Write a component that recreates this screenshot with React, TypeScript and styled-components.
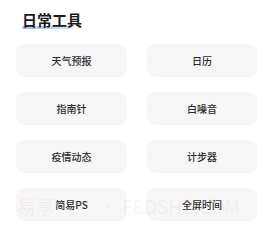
import React from "react";
import styled, { createGlobalStyle } from "styled-components";

const Global = createGlobalStyle`
  html, body { margin: 0; padding: 0; background: #ffffff; }
  body { font-family: "Noto Sans CJK SC", "Noto Sans", sans-serif; }
`;

const Page = styled.div`
  position: relative;
  width: 268px;
  height: 228px;
  overflow: hidden;
  padding-top: 7px;
  box-sizing: border-box;
`;

const Title = styled.h2`
  position: relative;
  display: inline-block;
  margin: 0 0 14px 22px;
  font-size: 15px;
  line-height: 20px;
  font-weight: 700;
  color: #1a1a1a;
  z-index: 0;
  &::after {
    content: "";
    position: absolute;
    left: 0;
    bottom: 1px;
    width: 55px;
    height: 3px;
    border-radius: 2px;
    background: linear-gradient(to right, #98bff4, rgba(185, 212, 250, 0.7) 80%, rgba(255, 255, 255, 0));
    z-index: -1;
  }
`;

const Grid = styled.div`
  display: grid;
  grid-template-columns: 111px 110px;
  grid-auto-rows: 33px;
  column-gap: 20px;
  row-gap: 15px;
  padding-left: 16px;
`;

const Tool = styled.div`
  position: relative;
  display: flex;
  align-items: center;
  justify-content: center;
  background: #f6f6f7;
  border-radius: 9px;
  font-size: 10px;
  font-weight: 500;
  color: #2b2b2b;
  z-index: 2;
`;

const Watermark = styled.div`
  position: absolute;
  left: 17px;
  top: 194px;
  display: flex;
  align-items: center;
  font-family: "Noto Sans CJK SC", "Liberation Sans", sans-serif;
  font-size: 19px;
  line-height: 24px;
  color: rgba(250, 160, 220, 0.16);
  pointer-events: none;
  white-space: nowrap;
  z-index: 3;
`;

const MarkGap = styled.span<{ $w: number }>`
  display: inline-block;
  width: ${(p) => p.$w}px;
`;

const tools = ["天气预报", "日历", "指南针", "白噪音", "疫情动态", "计步器", "简易PS", "全屏时间"];

export default function App() {
  return (
    <Page>
      <Global />
      <Title>日常工具</Title>
      <Grid>
        {tools.map((t) => (
          <Tool key={t}>{t}</Tool>
        ))}
      </Grid>
      <Watermark>
        易享
        <MarkGap $w={44} />
        · FEDSHZ.COM
      </Watermark>
    </Page>
  );
}
